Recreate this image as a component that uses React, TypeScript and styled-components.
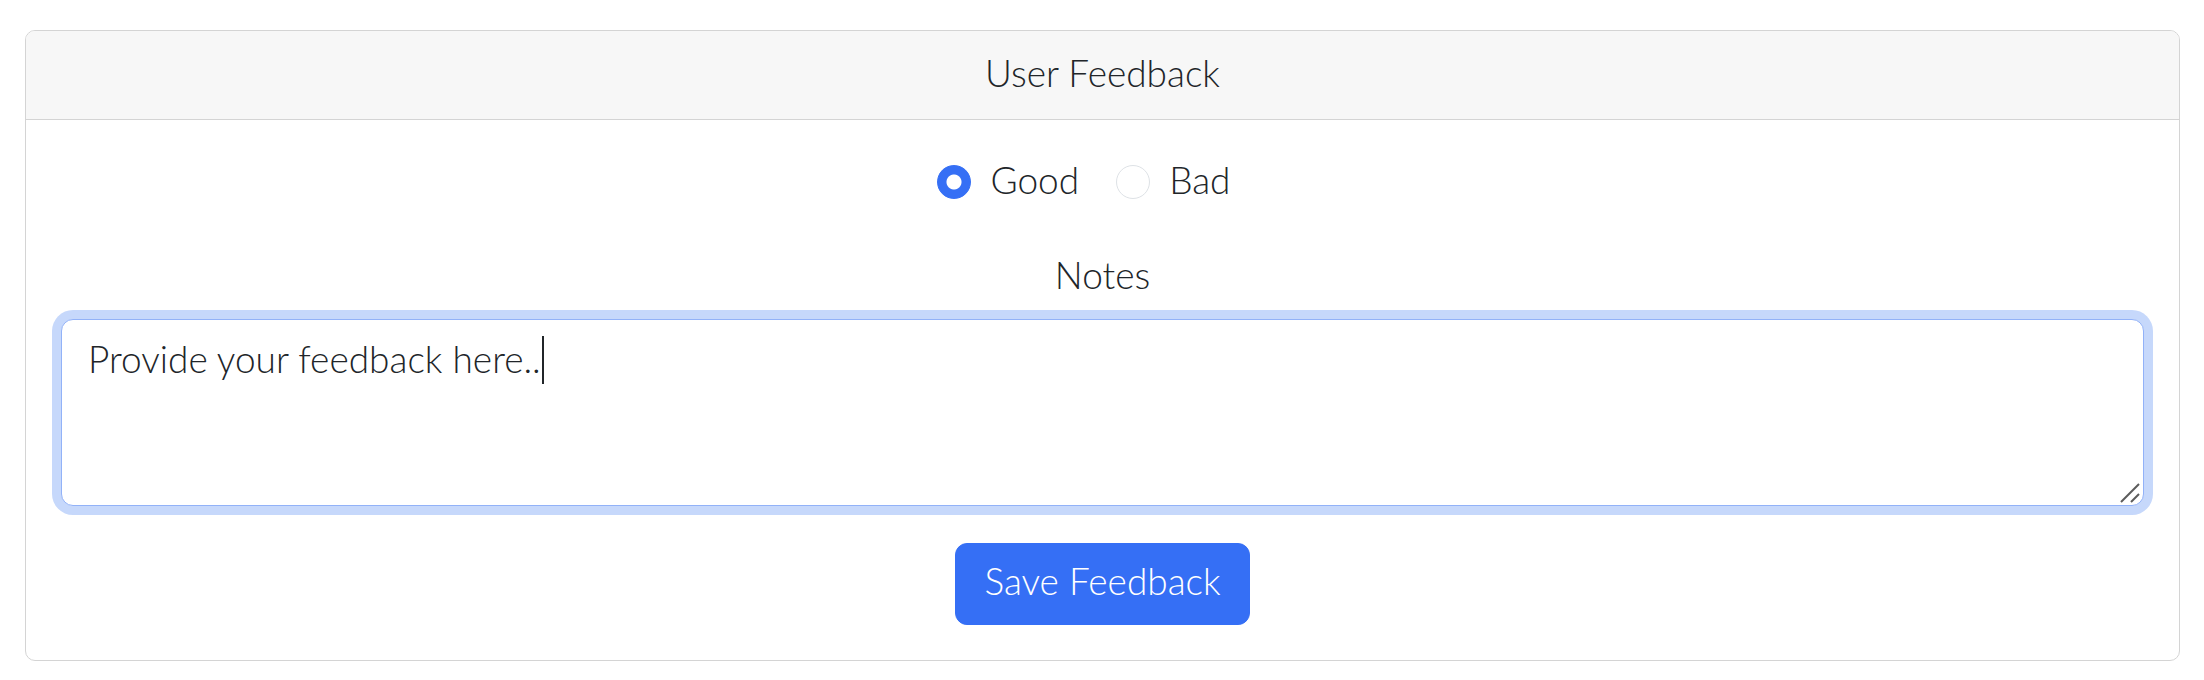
import React, { useEffect, useRef, useState } from "react";
import styled, { createGlobalStyle } from "styled-components";

const FONT = `Lato, "Open Sans", Arial, sans-serif`;

const GlobalStyle = createGlobalStyle`
  html, body {
    margin: 0;
    padding: 0;
    background: #ffffff;
  }
  body {
    font-family: ${FONT};
    font-weight: 300;
    color: #212529;
  }
  * {
    box-sizing: border-box;
  }
`;

const Page = styled.div`
  padding: 30px 24px 0 25px;
`;

const Card = styled.div`
  border: 1px solid #d4d4d4;
  border-radius: 10px;
  overflow: hidden;
  background: #ffffff;
`;

const CardHeader = styled.div`
  background: #f7f7f7;
  border-bottom: 1px solid #d4d4d4;
  padding: 14px 0 18px;
  text-align: center;
  font-size: 37px;
  line-height: 56px;
  color: #212529;
`;

const CardBody = styled.form`
  padding: 32px 35px 35px;
  display: flex;
  flex-direction: column;
  align-items: center;
`;

const RadioGroup = styled.div`
  display: flex;
  align-items: center;
  height: 56px;
`;

const RadioLabel = styled.label`
  display: flex;
  align-items: center;
  gap: 19px;
  margin-right: 37px;
  font-size: 37px;
  line-height: 56px;
  cursor: pointer;
`;

const RadioInput = styled.input`
  appearance: none;
  margin: 4px 0 0;
  width: 34px;
  height: 34px;
  border-radius: 50%;
  border: 1px solid #dee2e6;
  background: #ffffff;
  flex-shrink: 0;

  &:checked {
    border-color: #356ff5;
    background: radial-gradient(circle, #ffffff 0 7px, #356ff5 8px);
  }
`;

const NotesLabel = styled.label`
  margin-top: 39px;
  font-size: 37px;
  line-height: 56px;
`;

const AreaWrap = styled.div`
  position: relative;
  width: 100%;
  margin-top: 16px;
`;

const NotesArea = styled.textarea<{ $focused: boolean }>`
  display: block;
  width: 100%;
  height: 187px;
  padding: 11px 26px 8px;
  font-family: ${FONT};
  font-weight: 300;
  font-size: 37px;
  line-height: 56px;
  color: #212529;
  caret-color: transparent;
  border: 1px solid ${(p) => (p.$focused ? "#92b2f8" : "#dee2e6")};
  border-radius: 12px;
  outline: none;
  resize: none;
  box-shadow: ${(p) => (p.$focused ? "0 0 0 9px #c6d8fb" : "none")};
`;

const Caret = styled.span`
  position: absolute;
  top: 17px;
  width: 2px;
  height: 48px;
  background: #212529;
  pointer-events: none;
`;

const Grip = styled.svg`
  position: absolute;
  right: 4px;
  bottom: 3px;
  width: 20px;
  height: 20px;
  pointer-events: none;
`;

const SaveButton = styled.button`
  margin-top: 37px;
  padding: 9px 28px 15px;
  border: 1px solid #356ff5;
  border-radius: 12px;
  background: #356ff5;
  color: #ffffff;
  font-family: ${FONT};
  font-weight: 300;
  font-size: 37px;
  line-height: 56px;
  cursor: pointer;
`;

const measure = (text: string) => {
  const ctx = document.createElement("canvas").getContext("2d");
  if (!ctx) return text.length * 16;
  ctx.font = `300 37px ${FONT}`;
  return ctx.measureText(text).width;
};

export default function App() {
  const [rating, setRating] = useState("good");
  const [notes, setNotes] = useState("Provide your feedback here..");
  const [caretX, setCaretX] = useState(0);
  const areaRef = useRef<HTMLTextAreaElement>(null);

  useEffect(() => {
    const el = areaRef.current;
    if (el) {
      el.focus();
      el.setSelectionRange(el.value.length, el.value.length);
    }
    document.fonts.ready.then(() => setCaretX(27 + measure(notes)));
  }, [notes]);

  return (
    <>
      <GlobalStyle />
      <Page>
        <Card>
          <CardHeader>User Feedback</CardHeader>
          <CardBody onSubmit={(e) => e.preventDefault()}>
            <RadioGroup>
              <RadioLabel>
                <RadioInput
                  type="radio"
                  name="rating"
                  checked={rating === "good"}
                  onChange={() => setRating("good")}
                />
                Good
              </RadioLabel>
              <RadioLabel>
                <RadioInput
                  type="radio"
                  name="rating"
                  checked={rating === "bad"}
                  onChange={() => setRating("bad")}
                />
                Bad
              </RadioLabel>
            </RadioGroup>
            <NotesLabel htmlFor="notes">Notes</NotesLabel>
            <AreaWrap>
              <NotesArea
                id="notes"
                ref={areaRef}
                $focused={true}
                value={notes}
                onChange={(e) => setNotes(e.target.value)}
              />
              {caretX > 0 && <Caret style={{ left: caretX }} />}
              <Grip viewBox="0 0 20 20">
                <path
                  d="M1 19 L19 1 M11 19 L19 11"
                  stroke="#5c5c5c"
                  strokeWidth="2"
                  fill="none"
                />
              </Grip>
            </AreaWrap>
            <SaveButton type="submit">Save Feedback</SaveButton>
          </CardBody>
        </Card>
      </Page>
    </>
  );
}
